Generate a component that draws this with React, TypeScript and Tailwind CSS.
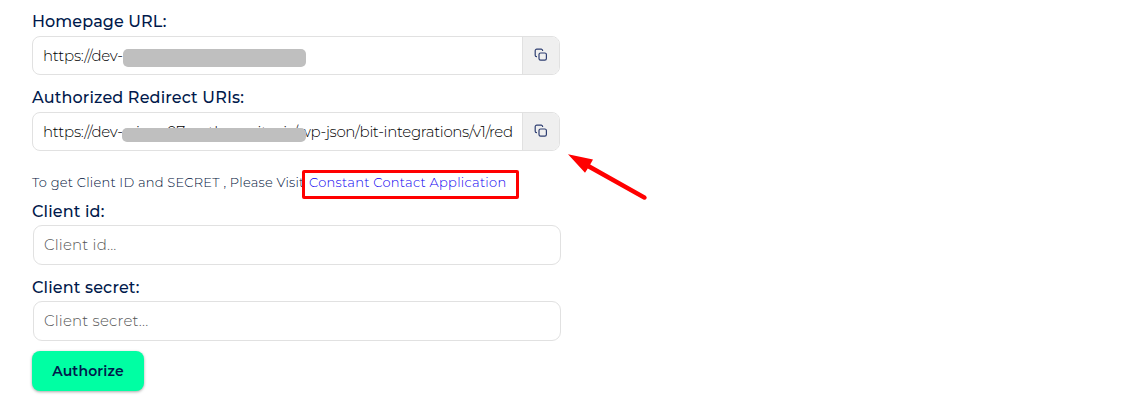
import type { ReactNode } from "react";

function CopyIcon() {
  return (
    <svg width="14" height="14" viewBox="0 0 14 14" fill="none" stroke="#2f3f72" strokeWidth="1.2">
      <rect x="5" y="5" width="7.4" height="7.2" rx="1.6" />
      <path d="M3 8.7H2.6A1.4 1.4 0 0 1 1.2 7.3V2.8A1.6 1.6 0 0 1 2.8 1.2H7.2A1.4 1.4 0 0 1 8.6 2.6V3" />
    </svg>
  );
}

function Label({ className, children }: { className: string; children: ReactNode }) {
  return (
    <div className="h-6 text-[16px] leading-6 font-medium text-[#00194b]">
      <span className={className}>{children}</span>
    </div>
  );
}

function CopyField({ children }: { children: ReactNode }) {
  return (
    <div className="mt-[2px] flex h-[39px] w-[528px] overflow-hidden rounded-lg border border-[#e1e1e1]">
      <div className="flex flex-1 items-center overflow-hidden pt-px pl-2.5 text-[15px] font-[350] whitespace-nowrap text-black">
        {children}
      </div>
      <button className="flex w-[37px] shrink-0 items-center justify-center border-l border-[#e1e1e1] bg-[#efefef] pb-px">
        <CopyIcon />
      </button>
    </div>
  );
}

export default function App() {
  return (
    <main className="flex h-[409px] w-[1136px] flex-col items-start bg-white pt-[10px] pl-8 font-['Montserrat','Inter',sans-serif]">
      <Label className="tracking-[0.1px]">Homepage URL:</Label>
      <CopyField>
        <span className="w-20 tracking-[-0.25px]">https://dev-</span>
        <span className="mt-1 h-[18px] w-[183px] rounded-[5px] bg-[#bfbfbf]" />
      </CopyField>

      <div className="mt-[11px]">
        <Label className="tracking-[0.15px]">Authorized Redirect URIs:</Label>
      </div>
      <CopyField>
        <span className="w-[79px] shrink-0 tracking-[-0.25px]">https://dev-</span>
        <span className="relative flex w-[176px] shrink-0">
          <span className="w-[45px] pl-[14px]">i</span>
          <span className="w-[42px]">07</span>
          <span className="w-[50px]">th</span>
          <span className="w-[26px]">it</span>
          <span className="w-[10px]">i</span>
          <span>/</span>
          <span className="absolute top-[7px] left-0 z-10 h-[14px] w-[184px] rounded-[5px] bg-[#bfbfbf]" />
        </span>
        <span className="tracking-[-0.34px]">wp-json/bit-integrations/v1/red</span>
      </CopyField>

      <p className="mt-[21px] flex h-5 items-center text-[13px] leading-5 font-[350] whitespace-pre text-[#00123b]">
        <span className="w-[277px] tracking-[0.23px]">To get Client ID and SECRET , Please Visit</span>
        <span className="relative">
          <a href="#" className="tracking-[0.29px] text-[#0d00f0]">
            Constant Contact Application
          </a>
          <span className="absolute -top-[2px] -left-[7px] h-[29px] w-[217px] rounded-[2px] border-3 border-[#ff0000]" />
          <svg className="absolute -top-[21px] left-[257px]" width="84" height="52" viewBox="0 0 84 52" fill="#f00">
            <path d="M2 3.2L27 8.6L24.2 13.4L79.7 44.8Q81.5 46.4 80.3 48Q79.1 49.4 76.9 48.2L21.8 17.6L19 21.7Z" />
          </svg>
        </span>
      </p>

      <div className="mt-[8px]">
        <Label className="tracking-[0.15px]">Client id:</Label>
      </div>
      <input
        placeholder="Client id..."
        className="mt-px ml-px h-10 w-[528px] rounded-[9px] border border-[#e1e1e1] px-2.5 pb-0.5 text-[15px] font-[350] tracking-[0.18px] placeholder:text-[#555]"
      />
      <div className="mt-[11px]">
        <Label className="tracking-[0.15px]">Client secret:</Label>
      </div>
      <input
        placeholder="Client secret..."
        className="mt-px ml-px h-10 w-[528px] rounded-[9px] border border-[#e1e1e1] px-2.5 pb-0.5 text-[15px] font-[350] tracking-[0.18px] placeholder:text-[#555]"
      />
      <button className="mt-[10px] h-10 w-28 shrink-0 rounded-lg bg-[#00ffa3] text-[14px] font-semibold tracking-[0.15px] text-[#00194b] shadow-[0_1px_3px_rgba(0,0,0,0.35)]">
        Authorize
      </button>
    </main>
  );
}
